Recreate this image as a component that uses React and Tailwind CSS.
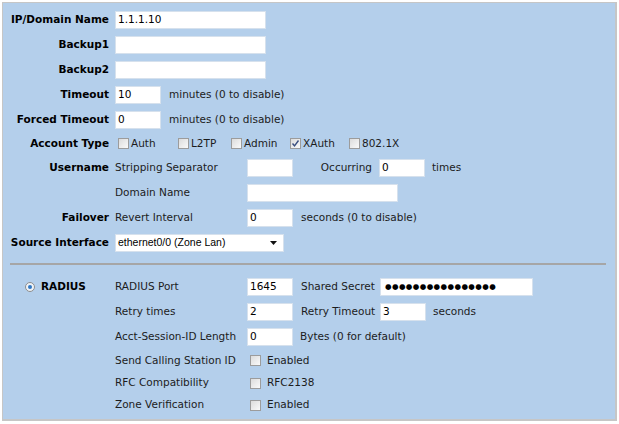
import React from "react";

const font = { fontFamily: '"DejaVu Sans", Verdana, sans-serif' };

function Field({ w, value }) {
    return (
        <div className={`${w} h-[18px] shrink-0 bg-white border border-[#d6e1ed] pl-[2px] flex items-center text-black`}>
            {value}
        </div>
    );
}

function Check({ checked }) {
    return (
        <span className="inline-flex h-[11px] w-[11px] shrink-0 items-center justify-center border border-[#9c9c9c] bg-gradient-to-br from-[#dcdcdc] to-[#fafafa]">
            {checked && (
                <svg width="9" height="9" viewBox="0 0 9 9">
                    <path d="M1.5 4.5 L3.5 6.8 L7.5 1.5" fill="none" stroke="#3a4f80" strokeWidth="1.4" />
                </svg>
            )}
        </span>
    );
}

function Row({ label, h = "h-[25px]", children }) {
    return (
        <div className={`flex ${h} items-center`}>
            <div className="w-[106px] shrink-0 text-right font-bold text-black">{label}</div>
            <div className="ml-[6px] flex items-center">{children}</div>
        </div>
    );
}

function RadRow({ left, h = "h-[25px]", children }) {
    return (
        <div className={`flex ${h} items-center`}>
            <div className="w-[112px] shrink-0 pl-[22px] flex items-center">{left}</div>
            {children}
        </div>
    );
}

function AcctItem({ w, label, checked }) {
    return (
        <span className={`${w} flex items-center`}>
            <Check checked={checked} />
            <span className="ml-[2px]">{label}</span>
        </span>
    );
}

export default function App() {
    return (
        <div className="min-h-screen bg-white pl-[2px] pt-[2px] text-[10.5px] text-[#1c1c1c]" style={font}>
            <div className="w-[615px] h-[419px] border-l border-t border-r-2 border-b-2 border-[#c6c6c6] bg-[#b4cfeb] pt-[4px]">
                <Row label="IP/Domain Name">
                    <Field w="w-[151px]" value="1.1.1.10" />
                </Row>
                <Row label="Backup1">
                    <Field w="w-[151px]" value="" />
                </Row>
                <Row label="Backup2">
                    <Field w="w-[151px]" value="" />
                </Row>
                <Row label="Timeout">
                    <Field w="w-[46px]" value="10" />
                    <span className="ml-[8px]">minutes (0 to disable)</span>
                </Row>
                <Row label="Forced Timeout">
                    <Field w="w-[46px]" value="0" />
                    <span className="ml-[8px]">minutes (0 to disable)</span>
                </Row>
                <Row label="Account Type" h="h-[23px]">
                    <span className="ml-[3px] flex items-center">
                        <AcctItem w="w-[60px]" label="Auth" />
                        <AcctItem w="w-[53px]" label="L2TP" />
                        <AcctItem w="w-[59px]" label="Admin" />
                        <AcctItem w="w-[59px]" label="XAuth" checked />
                        <AcctItem w="w-[60px]" label="802.1X" />
                    </span>
                </Row>
                <Row label="Username">
                    <span className="w-[132px]">Stripping Separator</span>
                    <Field w="w-[46px]" value="" />
                    <span className="w-[86px] pr-[7px] text-right">Occurring</span>
                    <Field w="w-[46px]" value="0" />
                    <span className="ml-[7px]">times</span>
                </Row>
                <Row label="">
                    <span className="w-[132px]">Domain Name</span>
                    <Field w="w-[151px]" value="" />
                </Row>
                <Row label="Failover">
                    <span className="w-[132px]">Revert Interval</span>
                    <Field w="w-[46px]" value="0" />
                    <span className="ml-[8px]">seconds (0 to disable)</span>
                </Row>
                <Row label="Source Interface">
                    <div className="w-[169px] h-[18px] bg-white border border-[#d6e1ed] pl-[2px] pr-[6px] flex items-center justify-between text-[10.5px] text-black" style={{ fontFamily: '"Liberation Sans", Arial, sans-serif' }}>
                        <span>ethernet0/0 (Zone Lan)</span>
                        <svg width="7" height="4" viewBox="0 0 7 4">
                            <path d="M0 0 H7 L3.5 4 Z" fill="#111" />
                        </svg>
                    </div>
                </Row>

                <div className="mt-[8px] ml-[7px] mr-[9px] h-[2px] bg-[#a6a6a6]" />

                <div className="mt-[9px]">
                    <RadRow
                        left={
                            <>
                                <span className="flex h-[10px] w-[10px] items-center justify-center rounded-full border border-[#8d8d8d] bg-[#eef2f6]">
                                    <span className="h-[4px] w-[4px] rounded-full bg-[#2f78c4]" />
                                </span>
                                <span className="ml-[6px] font-bold text-black">RADIUS</span>
                            </>
                        }
                    >
                        <span className="w-[132px]">RADIUS Port</span>
                        <Field w="w-[46px]" value="1645" />
                        <span className="ml-[8px] w-[79px]">Shared Secret</span>
                        <Field w="w-[153px]" value={<span className="text-[7.5px] tracking-[0.4px] pl-[2px]">{"●".repeat(16)}</span>} />
                    </RadRow>
                    <RadRow>
                        <span className="w-[132px]">Retry times</span>
                        <Field w="w-[46px]" value="2" />
                        <span className="ml-[8px] w-[79px]">Retry Timeout</span>
                        <Field w="w-[46px]" value="3" />
                        <span className="ml-[7px]">seconds</span>
                    </RadRow>
                    <RadRow>
                        <span className="w-[132px]">Acct-Session-ID Length</span>
                        <Field w="w-[46px]" value="0" />
                        <span className="ml-[7px]">Bytes (0 for default)</span>
                    </RadRow>
                    <RadRow h="h-[23px]">
                        <span className="w-[135px]">Send Calling Station ID</span>
                        <Check />
                        <span className="ml-[6px]">Enabled</span>
                    </RadRow>
                    <RadRow h="h-[22px]">
                        <span className="w-[135px]">RFC Compatibility</span>
                        <Check />
                        <span className="ml-[6px]">RFC2138</span>
                    </RadRow>
                    <RadRow h="h-[22px]">
                        <span className="w-[135px]">Zone Verification</span>
                        <Check />
                        <span className="ml-[6px]">Enabled</span>
                    </RadRow>
                </div>
            </div>
        </div>
    );
}
